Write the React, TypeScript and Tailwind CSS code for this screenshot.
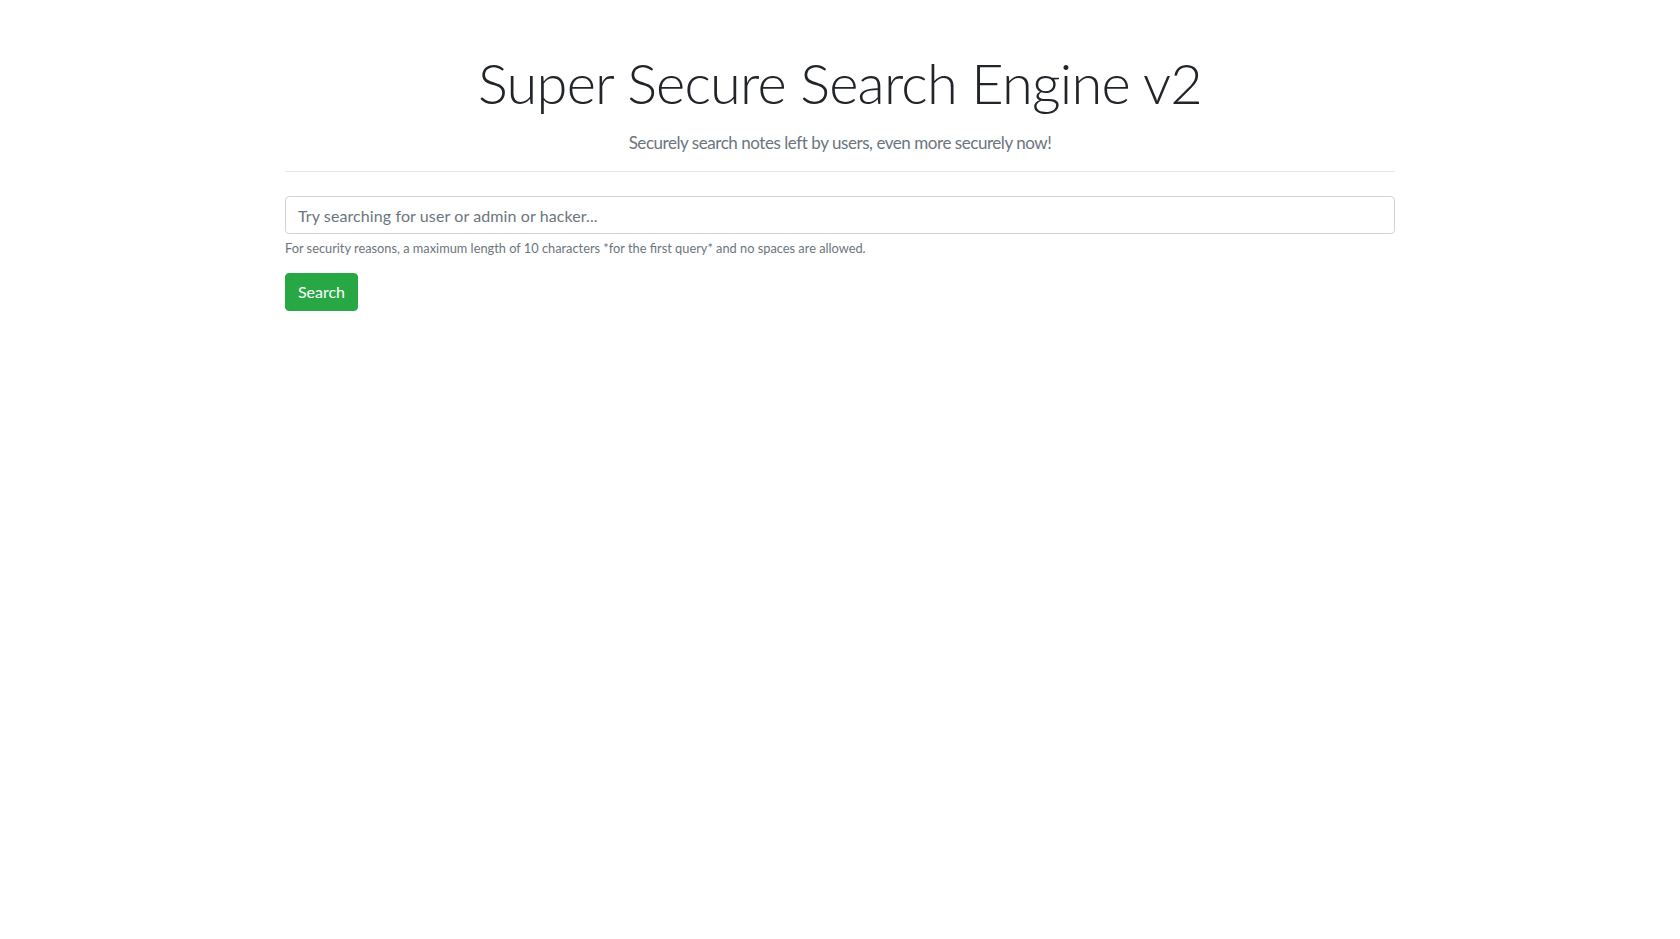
import React from "react";

export default function App() {
  return (
    <div className="min-h-screen bg-white font-['Lato','Open_Sans',sans-serif]">
      <div className="mx-auto w-[1110px] pt-[49px]">
        <div className="text-center">
          <h1 className="text-[56px] font-light leading-[67px] tracking-[-0.8px] text-[#212529]">
            Super Secure Search Engine v2
          </h1>
          <p className="mt-[15px] text-[17px] font-normal leading-[24px] tracking-[-0.45px] text-[#6c757d]">
            Securely search notes left by users, even more securely now!
          </p>
        </div>
        <div className="mt-[16px] h-px bg-[#e5e5e5]" />
        <form className="mt-[24px]" onSubmit={(e) => e.preventDefault()}>
          <input
            type="text"
            placeholder="Try searching for user or admin or hacker..."
            className="block h-[38px] w-full rounded-[4px] border border-[#ced4da] px-3 text-[16px] leading-[24px] tracking-[0.1px] text-[#495057] placeholder:text-[#6c757d] outline-none"
          />
          <small className="mt-[5px] block text-[12.8px] leading-[19px] text-[#6c757d]">
            For security reasons, a maximum length of 10 characters *for the first query* and no spaces are allowed.
          </small>
          <button
            type="submit"
            className="mt-[15px] h-[38px] w-[73px] rounded-[4px] border border-[#28a745] bg-[#28a745] text-[16px] leading-[24px] text-white"
          >
            Search
          </button>
        </form>
      </div>
    </div>
  );
}
